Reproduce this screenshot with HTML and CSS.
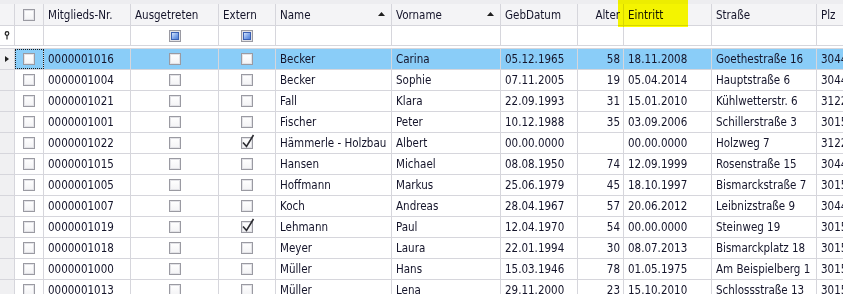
FILE: index.html
```html
<!DOCTYPE html>
<html lang="de">
<head>
<meta charset="utf-8">
<title>Mitglieder</title>
<link rel="stylesheet" href="styles.css">
</head>
<body>
<div class="grid">
  <div class="strip"></div>
  <div class="row head">
    <div class="c ind"></div>
    <div class="c mid"><span class="cb"></span></div>
    <div class="c">Mitglieds-Nr.</div>
    <div class="c">Ausgetreten</div>
    <div class="c">Extern</div>
    <div class="c sorted">Name<svg class="arrow" width="7" height="4" viewBox="0 0 7 4"><polygon points="3.5,0 7,4 0,4"/></svg></div>
    <div class="c sorted">Vorname<svg class="arrow" width="7" height="4" viewBox="0 0 7 4"><polygon points="3.5,0 7,4 0,4"/></svg></div>
    <div class="c">GebDatum</div>
    <div class="c num">Alter</div>
    <div class="c">Eintritt</div>
    <div class="c">Straße</div>
    <div class="c">Plz</div>
  </div>
  <div class="row filter">
    <div class="c ind"><svg class="pin" width="6" height="9" viewBox="0 0 6 9"><circle cx="3" cy="2.5" r="1.8" fill="none" stroke="#222" stroke-width="1.2"/><line x1="3" y1="4.2" x2="3" y2="8.5" stroke="#222" stroke-width="1.2"/></svg></div>
    <div class="c"></div>
    <div class="c"></div>
    <div class="c mid"><span class="cb indet"></span></div>
    <div class="c mid"><span class="cb indet"></span></div>
    <div class="c"></div>
    <div class="c"></div>
    <div class="c"></div>
    <div class="c"></div>
    <div class="c"></div>
    <div class="c"></div>
    <div class="c"></div>
  </div>
  <div class="sep"></div>

  <div class="row data selected">
    <div class="c ind"><span class="tri"></span></div>
    <div class="c mid focus"><span class="cb"></span></div>
    <div class="c">0000001016</div>
    <div class="c mid"><span class="cb"></span></div>
    <div class="c mid"><span class="cb"></span></div>
    <div class="c">Becker</div>
    <div class="c">Carina</div>
    <div class="c">05.12.1965</div>
    <div class="c num">58</div>
    <div class="c">18.11.2008</div>
    <div class="c">Goethestraße 16</div>
    <div class="c">30449</div>
  </div>
  <div class="row data">
    <div class="c ind"></div>
    <div class="c mid"><span class="cb"></span></div>
    <div class="c">0000001004</div>
    <div class="c mid"><span class="cb"></span></div>
    <div class="c mid"><span class="cb"></span></div>
    <div class="c">Becker</div>
    <div class="c">Sophie</div>
    <div class="c">07.11.2005</div>
    <div class="c num">19</div>
    <div class="c">05.04.2014</div>
    <div class="c">Hauptstraße 6</div>
    <div class="c">30449</div>
  </div>
  <div class="row data">
    <div class="c ind"></div>
    <div class="c mid"><span class="cb"></span></div>
    <div class="c">0000001021</div>
    <div class="c mid"><span class="cb"></span></div>
    <div class="c mid"><span class="cb"></span></div>
    <div class="c">Fall</div>
    <div class="c">Klara</div>
    <div class="c">22.09.1993</div>
    <div class="c num">31</div>
    <div class="c">15.01.2010</div>
    <div class="c">Kühlwetterstr. 6</div>
    <div class="c">31224</div>
  </div>
  <div class="row data">
    <div class="c ind"></div>
    <div class="c mid"><span class="cb"></span></div>
    <div class="c">0000001001</div>
    <div class="c mid"><span class="cb"></span></div>
    <div class="c mid"><span class="cb"></span></div>
    <div class="c">Fischer</div>
    <div class="c">Peter</div>
    <div class="c">10.12.1988</div>
    <div class="c num">35</div>
    <div class="c">03.09.2006</div>
    <div class="c">Schillerstraße 3</div>
    <div class="c">30159</div>
  </div>
  <div class="row data">
    <div class="c ind"></div>
    <div class="c mid"><span class="cb"></span></div>
    <div class="c">0000001022</div>
    <div class="c mid"><span class="cb"></span></div>
    <div class="c mid"><span class="cb checked"><svg class="tick" width="14" height="15" viewBox="0 0 14 15"><path d="M2 8.5 L5.5 12.5 L12.5 1" fill="none" stroke="#2a2a30" stroke-width="1.6"/></svg></span></div>
    <div class="c">Hämmerle - Holzbau</div>
    <div class="c">Albert</div>
    <div class="c">00.00.0000</div>
    <div class="c num"></div>
    <div class="c">00.00.0000</div>
    <div class="c">Holzweg 7</div>
    <div class="c">31224</div>
  </div>
  <div class="row data">
    <div class="c ind"></div>
    <div class="c mid"><span class="cb"></span></div>
    <div class="c">0000001015</div>
    <div class="c mid"><span class="cb"></span></div>
    <div class="c mid"><span class="cb"></span></div>
    <div class="c">Hansen</div>
    <div class="c">Michael</div>
    <div class="c">08.08.1950</div>
    <div class="c num">74</div>
    <div class="c">12.09.1999</div>
    <div class="c">Rosenstraße 15</div>
    <div class="c">30449</div>
  </div>
  <div class="row data">
    <div class="c ind"></div>
    <div class="c mid"><span class="cb"></span></div>
    <div class="c">0000001005</div>
    <div class="c mid"><span class="cb"></span></div>
    <div class="c mid"><span class="cb"></span></div>
    <div class="c">Hoffmann</div>
    <div class="c">Markus</div>
    <div class="c">25.06.1979</div>
    <div class="c num">45</div>
    <div class="c">18.10.1997</div>
    <div class="c">Bismarckstraße 7</div>
    <div class="c">30159</div>
  </div>
  <div class="row data">
    <div class="c ind"></div>
    <div class="c mid"><span class="cb"></span></div>
    <div class="c">0000001007</div>
    <div class="c mid"><span class="cb"></span></div>
    <div class="c mid"><span class="cb"></span></div>
    <div class="c">Koch</div>
    <div class="c">Andreas</div>
    <div class="c">28.04.1967</div>
    <div class="c num">57</div>
    <div class="c">20.06.2012</div>
    <div class="c">Leibnizstraße 9</div>
    <div class="c">30449</div>
  </div>
  <div class="row data">
    <div class="c ind"></div>
    <div class="c mid"><span class="cb"></span></div>
    <div class="c">0000001019</div>
    <div class="c mid"><span class="cb"></span></div>
    <div class="c mid"><span class="cb checked"><svg class="tick" width="14" height="15" viewBox="0 0 14 15"><path d="M2 8.5 L5.5 12.5 L12.5 1" fill="none" stroke="#2a2a30" stroke-width="1.6"/></svg></span></div>
    <div class="c">Lehmann</div>
    <div class="c">Paul</div>
    <div class="c">12.04.1970</div>
    <div class="c num">54</div>
    <div class="c">00.00.0000</div>
    <div class="c">Steinweg 19</div>
    <div class="c">30159</div>
  </div>
  <div class="row data">
    <div class="c ind"></div>
    <div class="c mid"><span class="cb"></span></div>
    <div class="c">0000001018</div>
    <div class="c mid"><span class="cb"></span></div>
    <div class="c mid"><span class="cb"></span></div>
    <div class="c">Meyer</div>
    <div class="c">Laura</div>
    <div class="c">22.01.1994</div>
    <div class="c num">30</div>
    <div class="c">08.07.2013</div>
    <div class="c">Bismarckplatz 18</div>
    <div class="c">30159</div>
  </div>
  <div class="row data">
    <div class="c ind"></div>
    <div class="c mid"><span class="cb"></span></div>
    <div class="c">0000001000</div>
    <div class="c mid"><span class="cb"></span></div>
    <div class="c mid"><span class="cb"></span></div>
    <div class="c">Müller</div>
    <div class="c">Hans</div>
    <div class="c">15.03.1946</div>
    <div class="c num">78</div>
    <div class="c">01.05.1975</div>
    <div class="c">Am Beispielberg 1</div>
    <div class="c">30159</div>
  </div>
  <div class="row data">
    <div class="c ind"></div>
    <div class="c mid"><span class="cb"></span></div>
    <div class="c">0000001013</div>
    <div class="c mid"><span class="cb"></span></div>
    <div class="c mid"><span class="cb"></span></div>
    <div class="c">Müller</div>
    <div class="c">Lena</div>
    <div class="c">29.11.2000</div>
    <div class="c num">23</div>
    <div class="c">15.10.2010</div>
    <div class="c">Schlossstraße 13</div>
    <div class="c">30159</div>
  </div>

  <div class="highlight"></div>
</div>
</body>
</html>
```

FILE: styles.css
```css
html, body {
  margin: 0;
  padding: 0;
  background: #ffffff;
  overflow: hidden;
}

.grid {
  position: relative;
  width: 900px;
  font-family: "DejaVu Sans Condensed", "DejaVu Sans", sans-serif;
  font-stretch: condensed;
  font-size: 11.5px;
  color: #14142a;
}

.strip {
  height: 4px;
  background: #ededf0;
}

.row {
  display: grid;
  grid-template-columns: 15px 29px 87px 88px 57px 116px 109px 77px 46px 88px 105px 83px;
  box-sizing: border-box;
  border-bottom: 1px solid #d6d6dc;
}

.c {
  box-sizing: border-box;
  border-right: 1px solid #d6d6dc;
  padding: 0 3px 0 4px;
  white-space: nowrap;
  overflow: hidden;
  display: flex;
  align-items: center;
}

.head {
  height: 22px;
  background: #f4f4f6;
}
.head .c {
  padding-top: 1px;
}

.filter {
  height: 20px;
  background: #ffffff;
}

.sep {
  height: 3px;
  box-sizing: border-box;
  border-bottom: 1px solid #d6d6dc;
  background: #ffffff;
}

.data {
  height: 21px;
  background: #ffffff;
}

.c.ind {
  padding: 0;
  justify-content: center;
}
.data .c.ind {
  background: #f0f0f2;
}

.c.mid {
  padding: 0;
  justify-content: center;
}

.c.num {
  justify-content: flex-end;
}

.c.sorted {
  justify-content: space-between;
  padding-right: 6px;
}
.arrow {
  fill: #1e1e1e;
  margin-top: -2px;
}

.selected {
  background: #8acdf8;
}

.c.focus {
  outline: 1px dotted #1a1a1a;
  outline-offset: -1px;
}

.tri {
  width: 0;
  height: 0;
  border-left: 4px solid #1e1e1e;
  border-top: 3px solid transparent;
  border-bottom: 3px solid transparent;
}

.pin {
  display: block;
}

.cb {
  position: relative;
  display: inline-block;
  width: 12px;
  height: 12px;
  box-sizing: border-box;
  border: 1px solid #9a9aa2;
  background: linear-gradient(#ffffff, #f3f3f5);
  box-shadow: inset 0 0 0 1px #e3e3e7;
}

.cb.indet::after {
  content: "";
  position: absolute;
  left: 1px;
  top: 1px;
  width: 8px;
  height: 8px;
  box-sizing: border-box;
  border: 1px solid #3a5fb2;
  background: linear-gradient(135deg, #d4e3fb 0%, #7ea5ea 55%, #4f7fd8 100%);
}

.tick {
  position: absolute;
  left: -1px;
  top: -4px;
}

.highlight {
  position: absolute;
  left: 618px;
  top: 0;
  width: 70px;
  height: 27px;
  background: #ffff00;
  mix-blend-mode: multiply;
  pointer-events: none;
}
```
